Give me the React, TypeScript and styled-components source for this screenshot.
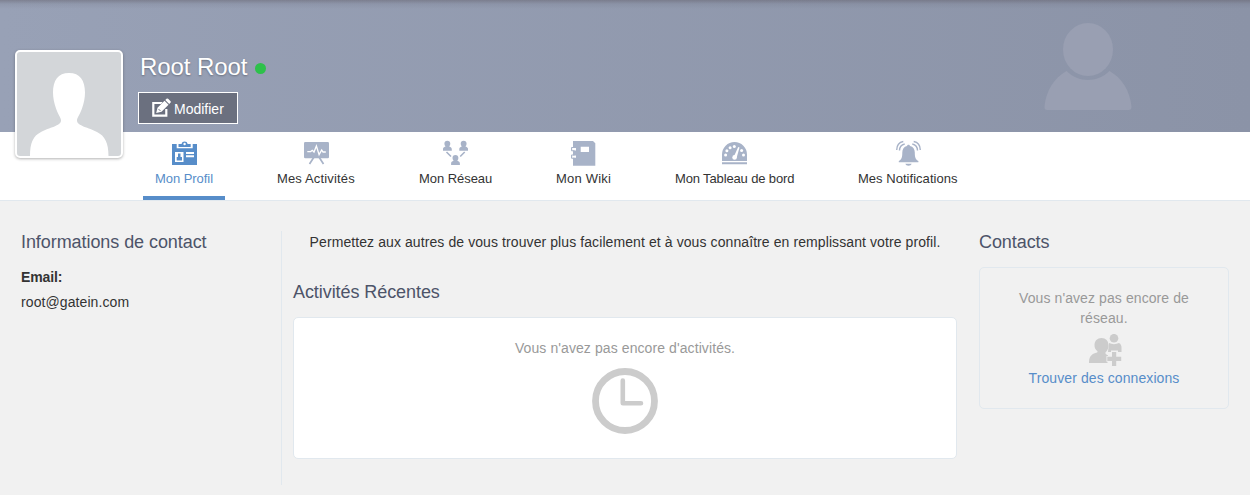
import React from "react";
import styled, { createGlobalStyle } from "styled-components";

const GlobalStyle = createGlobalStyle`
  * { box-sizing: border-box; }
  body {
    margin: 0;
    background: #f1f1f1;
    color: #333;
    font: 14px/20px "Liberation Sans", Arial, sans-serif;
    letter-spacing: 0.09px;
  }
  svg { display: block; flex: none; }
`;

const Page = styled.div`
  min-height: 495px;
  overflow: hidden;
`;

const Header = styled.header`
  position: relative;
`;

const Banner = styled.div`
  height: 132px;
  display: flex;
  justify-content: space-between;
  align-items: flex-start;
  padding: 22px 118px 0 138px;
  background:
    linear-gradient(to bottom, rgba(90, 85, 95, 0.42), rgba(90, 90, 105, 0.12) 4px, rgba(90, 90, 105, 0) 9px),
    linear-gradient(to right, #98a1b6, #8b93a7);
`;

const Identity = styled.div`
  padding-top: 30px;
`;

const Name = styled.h1`
  display: flex;
  align-items: center;
  gap: 7.5px;
  margin: 0 0 10px 2px;
  color: #fff;
  font-size: 24px;
  line-height: 30px;
  font-weight: normal;
  letter-spacing: -0.09px;
  text-shadow: 0 1px 2px rgba(0, 0, 0, 0.3);
`;

const Status = styled.span`
  width: 11px;
  height: 11px;
  margin-top: 2px;
  border-radius: 50%;
  background: #2dc14b;
`;

const EditButton = styled.button`
  display: flex;
  align-items: center;
  gap: 3px;
  width: 100px;
  height: 32px;
  padding: 2px 0 0 13px;
  border: 1px solid #fff;
  background: #6b707f;
  color: #fff;
  font: inherit;
  letter-spacing: 0;
`;

const EditIcon = styled.svg`
  margin-top: -3px;
`;

const Avatar = styled.div`
  position: absolute;
  left: 15px;
  top: 50px;
  width: 108px;
  height: 108px;
  border: 2px solid #fff;
  border-radius: 5px;
  background: #d3d6d9;
  box-shadow: 0 1px 3px rgba(0, 0, 0, 0.3);
  overflow: hidden;
`;

const Tabs = styled.nav`
  display: flex;
  gap: 40px;
  height: 69px;
  padding-left: 143px;
  background: #fff;
  border-bottom: 1px solid #e1e8ee;
`;

const Tab = styled.a<{ $active?: boolean; $width: number; $spacing: number }>`
  display: flex;
  flex-direction: column;
  width: ${(p) => p.$width}px;
  padding: 8px 12px 0;
  height: 68px;
  font-size: 13px;
  letter-spacing: ${(p) => p.$spacing}px;
  white-space: nowrap;
  color: ${(p) => (p.$active ? "#578dc9" : "#333")};
  border-bottom: 4px solid ${(p) => (p.$active ? "#578dc9" : "transparent")};
`;

const TabIcon = styled.svg<{ $active?: boolean }>`
  align-self: center;
  margin-bottom: 3px;
  color: ${(p) => (p.$active ? "#578dc9" : "#a8b3c8")};
`;

const Columns = styled.main`
  display: flex;
  align-items: flex-start;
  padding: 30px 21px 0;
`;

const InfoColumn = styled.section`
  width: 261px;
  height: 254px;
  border-right: 1px solid #e1e8ee;
`;

const Activity = styled.section`
  width: 664px;
  margin-left: 11px;
`;

const Contacts = styled.section`
  width: 250px;
  margin-left: 22px;
`;

const Title = styled.h2`
  margin: 0;
  color: #4d5469;
  font-size: 18px;
  line-height: 22px;
  font-weight: normal;
  letter-spacing: -0.07px;
`;

const Label = styled.div`
  margin-top: 14px;
  font-weight: bold;
  letter-spacing: -0.1px;
`;

const Value = styled.div`
  margin-top: 5px;
`;

const Hint = styled.p`
  margin: 1px 0 29px;
  text-align: center;
`;

const Panel = styled.div<{ $filled?: boolean }>`
  display: flex;
  flex-direction: column;
  align-items: center;
  height: 142px;
  margin-top: 14px;
  padding: 20px 30px 0;
  border: 1px solid #e1e8ee;
  border-radius: 5px;
  background: ${(p) => (p.$filled ? "#fff" : "transparent")};
  color: #999;
  text-align: center;
`;

const ClockIcon = styled.svg`
  margin-top: 9px;
`;

const InviteIcon = styled.svg`
  margin: 6px 0 1px 2px;
`;

const Link = styled.a`
  color: #578dc9;
`;

const icons = {
  profile: (
    <>
      <path fill="currentColor" d="M0 4h4.7v4.300h16V4H25v21H0z" />
      <path fill="currentColor" d="M6.500 4h3a3.200 3.200 0 0 1 6.200 0h3v3H6.500z" />
      <circle cx="12.600" cy="4" r="1.200" fill="#fff" />
      <path fill="#fff" d="M3 12h8.500v10H3zM14 12h8v2h-8zM14 15.300h8v2h-8z" />
      <path fill="currentColor" d="M6 13.500h2.500V17H10v3.500H4.700V17H6z" />
    </>
  ),
  activities: (
    <>
      <rect y="2" width="25" height="16.200" rx="1.200" fill="currentColor" />
      <path d="M3.300 11.600h3.400l1.600-1.300 1.700 1.700 2.400-6 2.700 8.600 2.600-4.600 1.300 2h2.800" fill="none" stroke="#fff" strokeWidth="1.300" />
      <path d="M9.700 17.500 5.500 24M15.300 17.500l4.200 6.500" stroke="currentColor" strokeWidth="1.700" />
    </>
  ),
  network: (
    <>
      <g fill="currentColor">
        <path id="member" d="M4.300.8c1.900 0 3 1.200 3 2.900 0 1-.4 1.900-1.100 2.500.5 1 2.600.6 2.600 3.200v1.300H0V9.400c0-2.600 2-2.200 2.500-3.200-.7-.6-1.100-1.500-1.100-2.500 0-1.700 1-2.900 2.900-2.900z" />
        <use href="#member" x="16.300" />
        <use href="#member" x="8.100" y="14.300" />
      </g>
      <path d="M3.500 12 8 16.500M21.700 12l-4.500 4.500" stroke="currentColor" strokeWidth="1.600" />
    </>
  ),
  wiki: (
    <>
      <path fill="currentColor" d="M2 1h20l2.300 2.300v22.400H2z" />
      <path fill="#fff" d="M9.700 6.700H18V12H9.700zM2 8h3v2.400H2zM2 15.400h3v2.400H2z" />
      <path d="M.5 7.500h3M.5 10.700h3M.5 15h3M.5 18.200h3M.6 7.500v3.200M.6 15v3.200" stroke="currentColor" strokeWidth="1.100" />
    </>
  ),
  dashboard: (
    <>
      <path fill="currentColor" d="M0 21v-6.500a12.500 12.500 0 0 1 25 0V21zM0 22.200h25v2H0z" />
      <g fill="#fff">
        <circle cx="3.600" cy="15" r="1.500" />
        <circle cx="4.900" cy="10.800" r="1.500" />
        <circle cx="8.100" cy="7.800" r="1.500" />
        <circle cx="12.300" cy="6.600" r="1.500" />
        <circle cx="19.600" cy="10.600" r="1.500" />
        <circle cx="21.500" cy="15" r="1.500" />
        <circle cx="12.600" cy="17.400" r="2.300" />
        <path d="m11.900 16.500 4.300-9.500 1.300.4-2.800 10z" />
      </g>
    </>
  ),
  notifications: (
    <>
      <path fill="currentColor" d="M12.500 4.700c.9 0 1.400.6 1.500 1.300 3.200.7 4.800 3.200 4.800 6.400 0 5 .8 7.100 3.600 8.600v1.300H2.800V21c2.800-1.500 3.500-3.600 3.500-8.600 0-3.200 1.600-5.700 4.700-6.400.1-.7.6-1.300 1.500-1.300zM9.300 23.800h6.400c-.5 1.300-1.600 1.900-3.200 1.900s-2.700-.6-3.200-1.900z" />
      <path d="M.700 10C.8 5.600 3.200 2.200 7.300 1.500M3.500 10.500c0-3 2-5.700 5.200-6.500M24.300 10c-.1-4.400-2.500-7.800-6.600-8.500M21.500 10.500c0-3-2-5.700-5.200-6.500" fill="none" stroke="currentColor" strokeWidth="1.400" />
    </>
  ),
};

const tabs: { label: string; icon: keyof typeof icons; width: number; spacing: number }[] = [
  { label: "Mon Profil", icon: "profile", width: 82, spacing: -0.05 },
  { label: "Mes Activités", icon: "activities", width: 102, spacing: 0.15 },
  { label: "Mon Réseau", icon: "network", width: 97, spacing: -0.05 },
  { label: "Mon Wiki", icon: "wiki", width: 79, spacing: 0.2 },
  { label: "Mon Tableau de bord", icon: "dashboard", width: 143, spacing: -0.14 },
  { label: "Mes Notifications", icon: "notifications", width: 124, spacing: 0.03 },
];

export default function App() {
  return (
    <Page>
      <GlobalStyle />
      <Header>
        <Banner>
          <Identity>
            <Name>
              Root Root
              <Status />
            </Name>
            <EditButton>
              <EditIcon width="19" height="19" viewBox="0 0 19 19">
                <path d="M10.500 5H1.300v12.700h13V11" fill="none" stroke="#fff" strokeWidth="2.200" />
                <path d="m4.200 15 1.300-5.200 7-7 4 4-7 7z" fill="#fff" stroke="#6b707f" strokeWidth=".8" paintOrder="stroke" />
                <path d="m13.300 2 1.200-1.200q.8-.8 1.600 0l2.300 2.300q.8.800 0 1.600L17.200 6z" fill="#fff" />
                <path d="m6.500 11 2 2" stroke="#6b707f" strokeWidth=".9" />
              </EditIcon>
              Modifier
            </EditButton>
          </Identity>
          <svg width="88" height="88" viewBox="0 0 88 88" fill="#999fb2">
            <ellipse cx="44" cy="27.500" rx="25" ry="26.500" />
            <path d="M22.500 49c12 12 31 12 43 0C78 56 86 69 87.500 84.500q.2 3.500-3 3.500h-81q-3.400 0-3-3.500C2 69 10 56 22.500 49z" />
          </svg>
        </Banner>
        <Tabs>
          {tabs.map((tab, i) => (
            <Tab key={tab.label} $active={i === 0} $width={tab.width} $spacing={tab.spacing}>
              <TabIcon $active={i === 0} width="25" height="26" viewBox="0 0 25 26">
                {icons[tab.icon]}
              </TabIcon>
              {tab.label}
            </Tab>
          ))}
        </Tabs>
        <Avatar>
          <svg width="104" height="104" viewBox="0 0 104 104" fill="#fff">
            <path d="M13 104c0-13 3-20 11-24 8-4.500 20-6 20-11.500 0-3-3-6-5-12-2-6-3-11-3-16 0-12 5-19.500 16-19.500s16 7.500 16 19.500c0 5-1 10-3 16s-5 9-5 12c0 5.500 12 7 20 11.500 8 4 11.500 11 11.500 24z" />
          </svg>
        </Avatar>
      </Header>
      <Columns>
        <InfoColumn>
          <Title>Informations de contact</Title>
          <Label>Email:</Label>
          <Value>root@gatein.com</Value>
        </InfoColumn>
        <Activity>
          <Hint>Permettez aux autres de vous trouver plus facilement et à vous connaître en remplissant votre profil.</Hint>
          <Title>Activités Récentes</Title>
          <Panel $filled>
            Vous n'avez pas encore d'activités.
            <ClockIcon width="66" height="67" viewBox="0 0 66 67" fill="none" stroke="#ccc">
              <circle cx="33" cy="34" r="29.500" strokeWidth="6.800" />
              <path d="M30.800 13.500v22.700H49" strokeWidth="4.600" strokeLinecap="round" strokeLinejoin="round" />
            </ClockIcon>
          </Panel>
        </Activity>
        <Contacts>
          <Title>Contacts</Title>
          <Panel>
            Vous n'avez pas encore de réseau.
            <InviteIcon width="33" height="33" viewBox="0 0 33 33" fill="#ccc">
              <circle cx="25" cy="4.200" r="4.300" />
              <path d="M20 9c3 1.500 7 1.500 10 0 1.800 1 2.500 2.500 2.500 4.500V18H29v-1.500h-7V18h-3z" />
              <path d="M12.500 4c4.300 0 7 3 7 7.300 0 3-1 5.500-3 7v1.200c0 .8 1.500 1.300 2.500 1.700v5.800h-.5v2H0c0-6 2-8.500 6.500-10 1.200-.4 2-.7 2-1.300v-.4c-2-1.500-3-3-3-6 0-4.300 2.700-7.300 7-7.300z" />
              <path d="M23 18h4.200v4.800h5V27h-5v5H23v-5h-4.700v-4.200H23z" stroke="#f1f1f1" strokeWidth="1.600" paintOrder="stroke" />
            </InviteIcon>
            <Link>Trouver des connexions</Link>
          </Panel>
        </Contacts>
      </Columns>
    </Page>
  );
}
